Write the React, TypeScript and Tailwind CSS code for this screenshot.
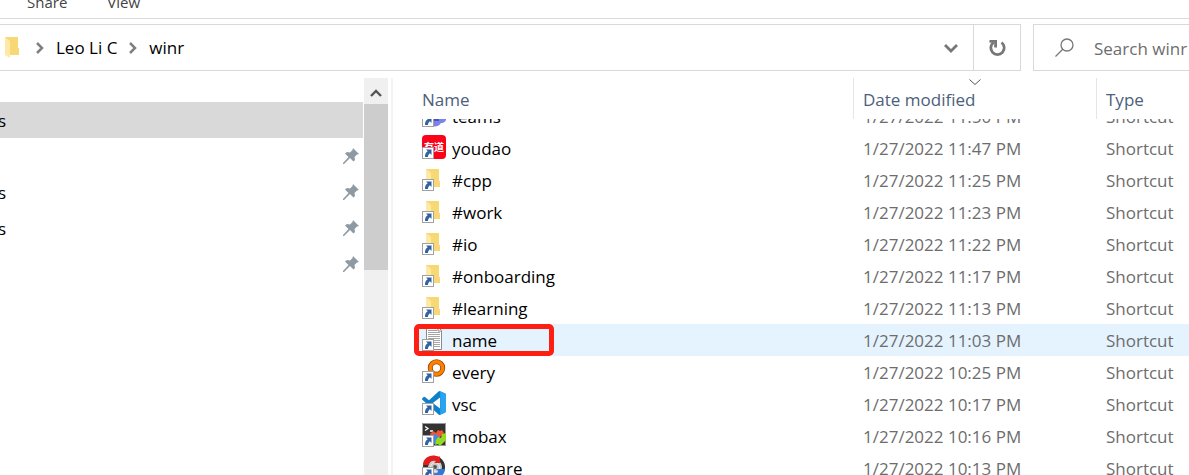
import React from "react";

type IconName = "teams" | "youdao" | "folder" | "text" | "every" | "vsc" | "mobax" | "compare";

interface Entry {
  name: string;
  date: string;
  icon: IconName;
}

const entries: Entry[] = [
  { name: "teams", date: "1/27/2022 11:50 PM", icon: "teams" },
  { name: "youdao", date: "1/27/2022 11:47 PM", icon: "youdao" },
  { name: "#cpp", date: "1/27/2022 11:25 PM", icon: "folder" },
  { name: "#work", date: "1/27/2022 11:23 PM", icon: "folder" },
  { name: "#io", date: "1/27/2022 11:22 PM", icon: "folder" },
  { name: "#onboarding", date: "1/27/2022 11:17 PM", icon: "folder" },
  { name: "#learning", date: "1/27/2022 11:13 PM", icon: "folder" },
  { name: "name", date: "1/27/2022 11:03 PM", icon: "text" },
  { name: "every", date: "1/27/2022 10:25 PM", icon: "every" },
  { name: "vsc", date: "1/27/2022 10:17 PM", icon: "vsc" },
  { name: "mobax", date: "1/27/2022 10:16 PM", icon: "mobax" },
  { name: "compare", date: "1/27/2022 10:13 PM", icon: "compare" },
];

const art: Record<IconName, React.ReactNode> = {
  teams: (
    <>
      <path d="M7 4h15a2 2 0 0 1 2 2v11a5 5 0 0 1-5 3 7 7 0 0 1-12 0z" fill="#7b83eb" />
      <path d="M7 4h10v14H7z" fill="#4b53bc" />
    </>
  ),
  youdao: (
    <>
      <rect width="24" height="24" rx="4" fill="#fc011a" />
      <text x="2" y="15.500" fontSize="10" fontWeight="700" fill="#fff" fontFamily="'Noto Sans CJK SC', sans-serif">
        有道
      </text>
    </>
  ),
  folder: (
    <>
      <path d="M4 2h13v12h1v6H4z" fill="#f8d775" />
      <path d="M4 2l5 4v17l-5-3z" fill="#ffe9a6" />
    </>
  ),
  text: (
    <>
      <path d="M4.500.5h12l3 3v19h-15z" fill="#fff" stroke="#8a8a8a" />
      <path d="M16 1v3h3" fill="none" stroke="#8a8a8a" />
      <path d="M6 3.500h9M6 5.500h12M6 7.500h12M6 9.500h12M6 11.500h12M6 13.500h12M6 15.500h12M6 17.500h12M6 19.500h12" stroke="#a5a5a5" />
    </>
  ),
  every: (
    <>
      <path d="M9 13l-6 6" stroke="#a34a00" strokeWidth="4" />
      <circle cx="14.500" cy="9" r="6.200" fill="none" stroke="#9c4700" strokeWidth="5" />
      <circle cx="14.500" cy="9" r="6.200" fill="none" stroke="#ff7f00" strokeWidth="3.400" />
    </>
  ),
  vsc: (
    <>
      <path
        fill="#0f7fcb"
        d="M23.150 2.587L18.210.21a1.494 1.494 0 0 0-1.705.29l-9.460 8.630-4.120-3.128a.999.999 0 0 0-1.276.057L.327 7.261A1 1 0 0 0 .326 8.740L3.899 12 .326 15.260a1 1 0 0 0 .001 1.479L1.650 17.940a.999.999 0 0 0 1.276.057l4.120-3.128 9.460 8.630a1.492 1.492 0 0 0 1.704.290l4.942-2.377A1.500 1.500 0 0 0 24 20.060V3.939a1.500 1.500 0 0 0-.850-1.352zm-5.146 14.861L10.826 12l7.178-5.448v10.896z"
      />
      <path d="M18.200.2l5 2.400c.5.3.8.8.8 1.400v16c0 .6-.3 1.200-.8 1.400l-5 2.400z" fill="#29a4ee" />
    </>
  ),
  mobax: (
    <>
      <rect x=".5" y=".5" width="23" height="22" fill="#333" stroke="#999" />
      <path d="M3 3.500l3 2-3 2M8 8h3" fill="none" stroke="#fff" strokeWidth="1.300" />
      <path d="M8 11l3-3 3 2 2-3 2 1 2-1 2 3-4 4-8 3z" fill="#f45535" />
      <path d="M9 15l3-4 3 1 3 3-3 5-6 2z" fill="#4187e8" />
      <path d="M14 17l2-3 3 1 1-4 4-1v7l-6 6-2-2-3 1z" fill="#93da21" />
    </>
  ),
  compare: (
    <>
      <circle cx="12" cy="12" r="11" fill="#333" />
      <circle cx="13" cy="12" r="7" fill="#c9c9c9" />
      <circle cx="13" cy="12" r="4.500" fill="none" stroke="#eee" />
      <circle cx="13" cy="12" r="2" fill="#555" />
      <path d="M1 10C1 2 10-2 17 2l1-1v7h-6l2-2c-4-1-7 0-7 4z" fill="#e51c1c" />
      <path d="M23 14c0 7-8 11-14 9l2-5c5 1 5-1 5-2l-2-2h9z" fill="#2f79d8" />
    </>
  ),
};

function ShortcutIcon({ name }: { name: IconName }) {
  return (
    <svg className="size-6 shrink-0" viewBox="0 0 24 24" aria-hidden="true">
      {art[name]}
      <rect x=".5" y="12.500" width="11" height="11" fill="#fff" stroke="#a0a0a0" />
      <path d="M4 14.500h5.500V20l-1.700-1.700C6.500 19.500 6 20.500 6 22H3c0-3 .7-4.700 2.700-5.800z" fill="#2e62a3" />
    </svg>
  );
}

function Chevron() {
  return (
    <svg className="h-3 w-2 shrink-0" viewBox="0 0 8 12" aria-hidden="true">
      <path d="M1 1l5 5-5 5" fill="none" stroke="#808080" strokeWidth="2.500" />
    </svg>
  );
}

function Pin() {
  return (
    <svg className="size-4 shrink-0" viewBox="0 0 16 16" fill="#8d9aa3" aria-hidden="true">
      <path d="M10 0l6 6-2 .5-2.500 2.500.5 3-1.500 1.500-3.500-3.500L1 16H0v-1l5.500-6L2 5.500 4 4l3 .5L9.500 2z" />
    </svg>
  );
}

const places = [
  { text: "s", pinned: false },
  { text: "", pinned: true },
  { text: "s", pinned: true },
  { text: "s", pinned: true },
  { text: "", pinned: true },
];

const columns = "grid grid-cols-[438px_243px_1fr]";

export default function App() {
  return (
    <div className="flex h-screen flex-col overflow-hidden bg-white font-['Open_Sans','Noto_Sans',sans-serif] text-[17px] text-black">
      <nav className="flex h-[19px] shrink-0 items-end gap-10 overflow-hidden border-b border-[#d9d9d9] pb-2 pl-[27px] text-[15px] leading-4 text-[#444]">
        <button type="button">Share</button>
        <button type="button">View</button>
      </nav>

      <div className="mt-[5px] flex h-[47px] shrink-0 gap-3">
        <div className="flex w-[1021px] shrink-0 border-y border-r border-[#d9d9d9]">
          <div className="flex flex-1 items-center pl-[5px]">
            <svg className="h-[21px] w-[14px] shrink-0" viewBox="0 0 14 21" aria-hidden="true">
              <path d="M0 0h13v11h1v7H0z" fill="#f8d775" />
              <path d="M0 0l5 4v17l-5-3z" fill="#ffe9a6" />
            </svg>
            <div className="ml-[17px] flex items-center gap-3">
              <Chevron />
              <a href="#leo">Leo Li C</a>
              <Chevron />
              <a href="#winr">winr</a>
            </div>
          </div>
          <button type="button" aria-label="Previous locations" className="flex w-11 items-center justify-center">
            <svg className="h-[10px] w-[14px]" viewBox="0 0 14 10" aria-hidden="true">
              <path d="M1 2l6 6 6-6" fill="none" stroke="#777" strokeWidth="2.800" />
            </svg>
          </button>
          <button type="button" aria-label="Refresh" className="flex w-[47px] items-center justify-center border-l border-[#d9d9d9]">
            <svg className="size-[18px]" viewBox="0 0 18 18" aria-hidden="true">
              <path d="M13.500 3.500a6.700 6.700 0 1 1-8 0" fill="none" stroke="#777" strokeWidth="2.800" />
              <path d="M1.500 1h7.500v7.500H6.200V3.800H1.500z" fill="#777" />
            </svg>
          </button>
        </div>
        <label className="flex min-w-0 flex-1 items-center gap-5 border-y border-l border-[#d9d9d9] pl-[21px]">
          <svg className="size-[19px] shrink-0" viewBox="0 0 19 19" fill="none" stroke="#777" strokeWidth="1.300" aria-hidden="true">
            <circle cx="12" cy="7" r="6" />
            <path d="M8 11l-7.500 7.500" />
          </svg>
          <input type="text" aria-label="Search winr" placeholder="Search winr" className="w-full min-w-0 pt-0.5 outline-none placeholder:text-[#6d6d6d]" />
        </label>
      </div>

      <div className="mt-[7px] flex min-h-0 flex-1">
        <aside className="w-[364px] shrink-0 overflow-hidden pt-6">
          <ul>
            {places.map((place, i) => (
              <li
                key={i}
                className={`mr-px flex h-9 items-center justify-between pr-1 ${i === 0 ? "bg-[#d9d9d9]" : ""}`}
              >
                <span className="-ml-0.5 pt-0.5">{place.text}</span>
                {place.pinned && <Pin />}
              </li>
            ))}
          </ul>
        </aside>
        <div className="w-6 shrink-0 bg-[#f0f0f0]">
          <button type="button" aria-label="Scroll up" className="flex h-[26px] w-full items-center justify-center pt-1">
            <svg className="h-2 w-3" viewBox="0 0 12 8" aria-hidden="true">
              <path d="M1 7l5-5 5 5" fill="none" stroke="#555" strokeWidth="2.400" />
            </svg>
          </button>
          <div className="h-[166px] bg-[#cdcdcd]" />
        </div>
        <div className="ml-[3px] w-0.5 shrink-0 bg-[#f3f3f3]" />

        <main className="min-w-0 flex-1 overflow-hidden pl-[23px]">
          <table className="block">
            <thead className="relative z-10 block bg-white text-[#4c607a]">
              <tr className={`${columns} h-[41px]`}>
                <th className="flex items-center border-r border-[#e5e5e5] pt-0.5 pl-1.5 font-normal">
                  <button type="button">Name</button>
                </th>
                <th className="relative flex items-center border-r border-[#e5e5e5] pt-0.5 pl-[9px] font-normal">
                  <button type="button">Date modified</button>
                  <svg className="absolute top-px left-1/2 h-1.5 w-3 -translate-x-1/2" viewBox="0 0 12 6" aria-hidden="true">
                    <path d="M.5.5L6 5.500 11.500.5" fill="none" stroke="#555" />
                  </svg>
                </th>
                <th className="flex items-center pt-0.5 pl-[9px] font-normal">
                  <button type="button">Type</button>
                </th>
              </tr>
            </thead>
            <tbody className="-mt-[19px] block text-[#6d6d6d]">
              {entries.map((entry) => (
                <tr key={entry.name} className={`${columns} h-8 ${entry.name === "name" ? "bg-[#e5f3ff]" : ""}`}>
                  <td className="relative flex items-center gap-1.5 pl-1.5 text-black">
                    <span className="pb-0.5">
                      <ShortcutIcon name={entry.icon} />
                    </span>
                    <span className="pt-0.5">{entry.name}</span>
                    {entry.name === "name" && (
                      <span className="absolute inset-y-0 -left-0.5 w-[140px] rounded-[5px] border-5 border-[#ff1f12]" />
                    )}
                  </td>
                  <td className="flex items-center pt-0.5 pl-[9px]">{entry.date}</td>
                  <td className="flex items-center pt-0.5 pl-[9px]">Shortcut</td>
                </tr>
              ))}
            </tbody>
          </table>
        </main>
      </div>
    </div>
  );
}
